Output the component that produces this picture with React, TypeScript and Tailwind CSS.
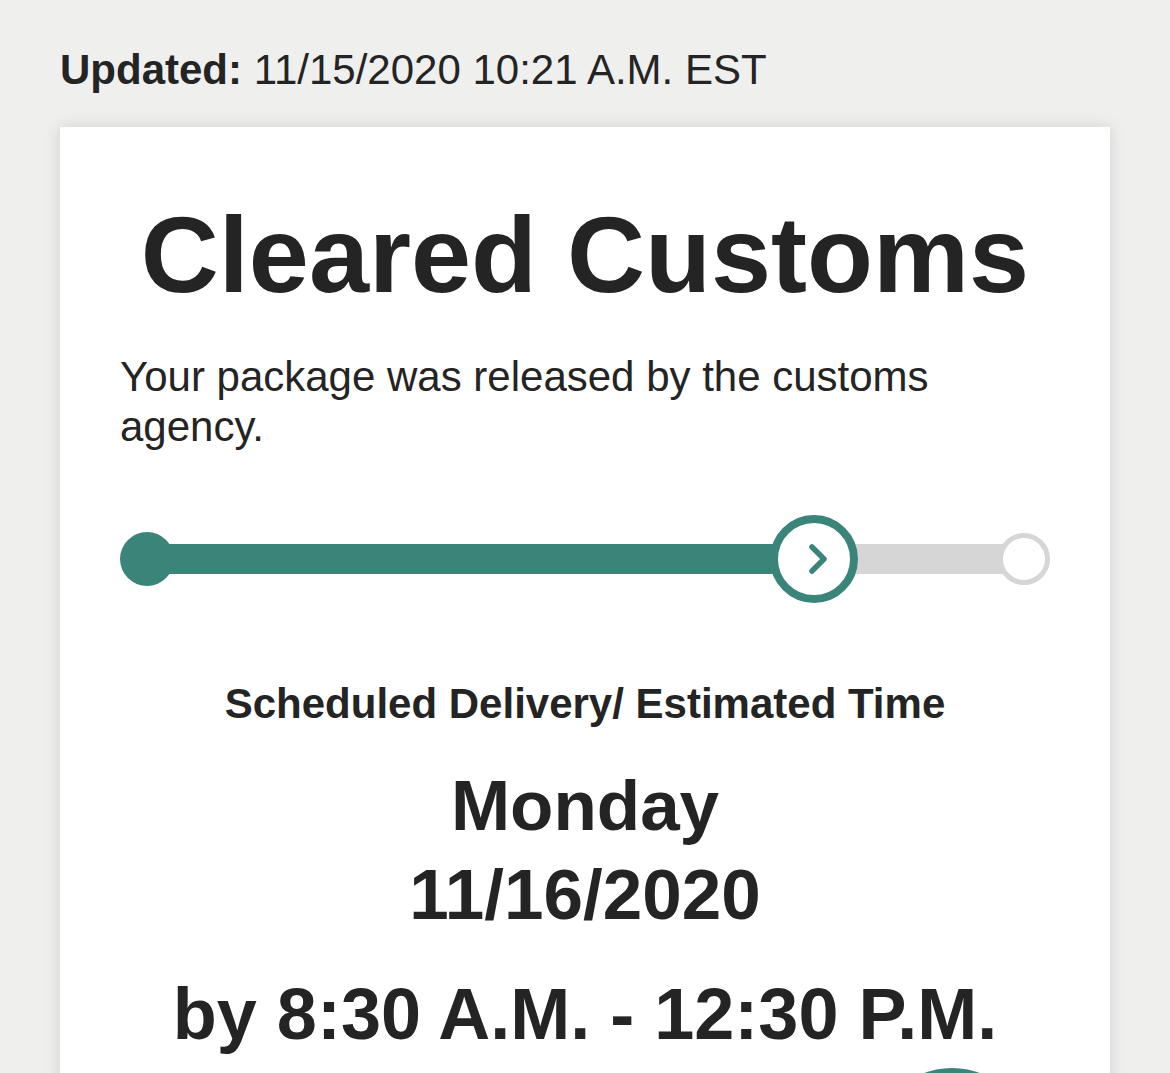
import React from "react";

export default function App() {
  return (
    <div
      className="min-h-screen bg-[#efefee] px-[60px] pt-[46px] text-[#242424]"
      style={{ fontFamily: '"Liberation Sans", Arial, Helvetica, sans-serif' }}
    >
      <p className="text-[42px] leading-[48px]">
        <span className="font-bold">Updated:</span> 11/15/2020 10:21 A.M. EST
      </p>

      <div className="mt-[33px] bg-white px-[60px] pt-[74px] pb-[40px] shadow-[0_0_16px_rgba(0,0,0,0.13)]">
        <h1 className="text-center text-[108px] font-bold leading-[108px]">
          Cleared Customs
        </h1>

        <p className="mt-[43px] text-[42px] leading-[50px]">
          Your package was released by the customs agency.
        </p>

        {/* progress */}
        <div className="mt-[63px] flex h-[88px] items-center">
          <div className="relative z-10 h-[54px] w-[54px] shrink-0 rounded-full bg-[#3a847a]" />
          <div className="-mx-[8px] h-[30px] flex-1 bg-[#3a847a]" />
          <div className="relative z-10 flex h-[88px] w-[88px] shrink-0 items-center justify-center rounded-full border-[8px] border-[#3a847a] bg-white">
            <svg width="28" height="36" viewBox="0 0 28 36" className="ml-[4px]">
              <path
                d="M10 6 L22 18 L10 30"
                fill="none"
                stroke="#3a847a"
                strokeWidth="5.5"
                strokeLinecap="round"
                strokeLinejoin="round"
              />
            </svg>
          </div>
          <div className="-mx-[8px] h-[30px] w-[156px] shrink-0 bg-[#d6d6d6]" />
          <div className="relative z-10 h-[52px] w-[52px] shrink-0 rounded-full border-[5px] border-[#d6d6d6] bg-white" />
        </div>

        <p className="mt-[76px] text-center text-[42px] font-bold leading-[50px]">
          Scheduled Delivery/ Estimated Time
        </p>

        <p className="mt-[32px] text-center text-[71px] font-bold leading-[89px]">
          Monday
          <br />
          11/16/2020
        </p>

        <p className="mt-[31px] whitespace-nowrap text-center text-[72px] font-bold leading-[89px]">
          by 8:30 A.M. - 12:30 P.M.
        </p>

        <div className="mt-[9px] flex justify-end pr-[18px]">
          <div className="h-[160px] w-[160px] rounded-full bg-[#3a847a]" />
        </div>
      </div>
    </div>
  );
}
